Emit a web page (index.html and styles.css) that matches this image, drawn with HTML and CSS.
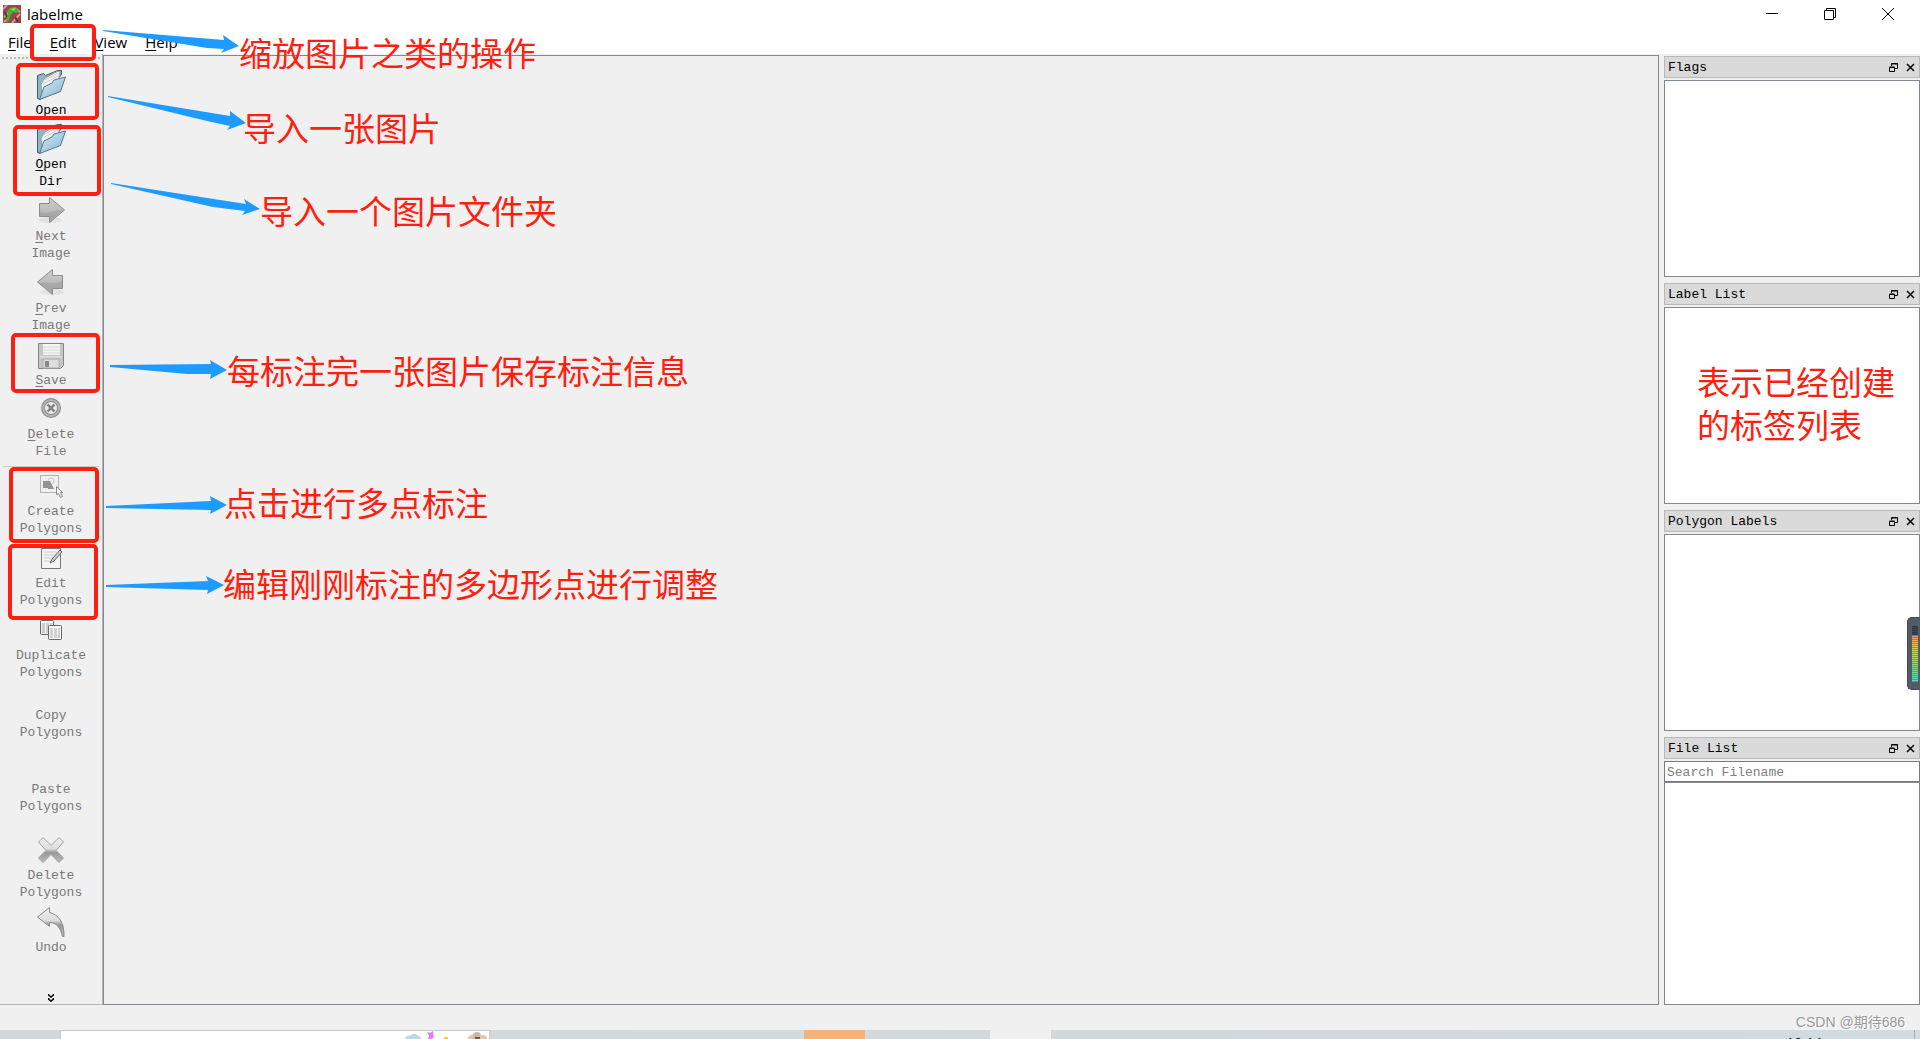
FILE: index.html
```html
<!DOCTYPE html>
<html lang="zh-CN">
<head>
  <meta charset="UTF-8" />
  <meta name="viewport" content="width=device-width, initial-scale=1.0" />
  <title>labelme</title>
  <link rel="stylesheet" href="styles.css">
</head>
<body>
  <header class="titlebar">
    <svg class="app-icon" width="18" height="18" viewBox="0 0 18 18">
      <rect width="18" height="18" fill="#96494c"/>
      <path d="M0 4l4-4M1 12l5-5M9 18l8-9M12 3l5 4M1 17l4-3" stroke="#d69a91" stroke-width="2"/>
      <path d="M12 12l3 5M2 7l2 5" stroke="#6b2f36" stroke-width="2"/>
      <path d="M3 17c1-4 1-6 2-8l-1-3 3-3 5-1 3 3-1 3-4-1-3 4-1 5z" fill="#42b52f"/>
      <path d="M7 4l6-1-2 3z" fill="#7be25b"/>
    </svg>
    <h1>labelme</h1>
    <div class="window-buttons">
      <button aria-label="Minimize"><svg width="12" height="12" viewBox="0 0 12 12"><path d="M0 5.500h12"/></svg></button>
      <button aria-label="Restore"><svg width="12" height="12" viewBox="0 0 12 12"><path d="M.5 2.500h9v9h-9zM2.500 2.500v-2h9v9h-2"/></svg></button>
      <button aria-label="Close"><svg width="12" height="12" viewBox="0 0 12 12"><path d="M0 0l12 12M12 0L0 12"/></svg></button>
    </div>
  </header>

  <nav class="menubar">
    <button><u>F</u>ile</button>
    <button><u>E</u>dit</button>
    <button><u>V</u>iew</button>
    <button><u>H</u>elp</button>
  </nav>

  <main>
    <div class="toolbar">
      <div class="handle"></div>
      <button class="tool short">
        <svg viewBox="0 0 32 32"><use href="#folder"/></svg>
        <span><u>O</u>pen</span>
      </button>
      <button class="tool">
        <svg viewBox="0 0 32 32"><use href="#folder"/></svg>
        <span><u>O</u>pen<br>Dir</span>
      </button>
      <button class="tool" disabled>
        <svg viewBox="0 0 32 32"><ellipse cx="15" cy="25" rx="12" ry="3" fill="#e2e2e2"/><path d="M4.500 8.500h10v-6l15 12.500-15 12.500v-6h-10z" fill="url(#metal)" stroke="#8c8c8c"/><path d="M5 17c8 3 14-3 23-2L15 26v-5H5z" fill="#999" opacity=".5"/></svg>
        <span><u>N</u>ext<br>Image</span>
      </button>
      <button class="tool" disabled>
        <svg viewBox="0 0 32 32"><ellipse cx="17" cy="25" rx="12" ry="3" fill="#e2e2e2"/><path d="M27.500 8.500h-10v-6L2.500 15l15 12.500v-6h10z" fill="url(#metal)" stroke="#8c8c8c"/><path d="M27 14c-8 4-14 0-23 2l13 10v-5h10z" fill="#999" opacity=".5"/></svg>
        <span><u>P</u>rev<br>Image</span>
      </button>
      <button class="tool short" disabled>
        <svg viewBox="0 0 32 32"><path d="M3.500 4.500h25v22l-3 3h-22z" fill="#c5c5c5" stroke="#858585"/><path d="M8 5h17v11H8z" fill="#f5f5f5"/><path d="M8 8h17M8 11h17M8 14h17" stroke="#d6d6d6"/><path d="M5 18h22" stroke="#eee"/><path d="M8 20h16v9H8z" fill="#ddd" stroke="#aaa"/><path d="M10 22h4v6h-4z" fill="#898989"/></svg>
        <span><u>S</u>ave</span>
      </button>
      <button class="tool" disabled>
        <svg viewBox="0 0 32 32"><circle cx="16" cy="15" r="8" fill="#efefef" stroke="#8c8c8c" stroke-width="4"/><circle cx="16" cy="15" r="8" fill="none" stroke="#b4b4b4" stroke-width="2"/><path d="M12.500 11.500l7 7M19.500 11.500l-7 7" stroke="#858585" stroke-width="2.500"/></svg>
        <span><u>D</u>elete<br>File</span>
      </button>
      <hr>
      <button class="tool" disabled>
        <svg viewBox="0 0 32 32"><circle cx="16" cy="11" r="3" fill="#eee" stroke="#ccc"/><path d="M8 11h7l4 8h-6v-1H8z" fill="#929292"/><path d="M5.500 5.500h18v17h-18z" fill="none" stroke="#777" stroke-dasharray="1 1"/><path d="M21.500 16.500v8l2-1 2 4 2-1-2-4h2z" fill="#f5f5f5" stroke="#888"/></svg>
        <span>Create<br>Polygons</span>
      </button>
      <button class="tool" disabled>
        <svg viewBox="0 0 32 32"><path d="M6.500 6.500h19v20h-19z" fill="#f4f4f4" stroke="#777"/><path d="M9 10h12M9 13h12M9 16h9M9 19h6" stroke="#ccc"/><path d="M15 21l2-4 8-9 2 2-8 9z" fill="#ccc" stroke="#666"/></svg>
        <span>Edit<br>Polygons</span>
      </button>
      <button class="tool" disabled>
        <svg viewBox="0 0 32 32"><rect x="5.500" y="6.500" width="13" height="14" rx="1" fill="#f2f2f2" stroke="#666"/><path d="M7 10h10M7 12h10M7 14h10M7 16h10M7 18h10" stroke="#aaa" stroke-dasharray="3 1"/><rect x="13.500" y="11.500" width="13" height="14" rx="1" fill="#f7f7f7" stroke="#666"/><path d="M15 15h10M15 17h10M15 19h10M15 21h10M15 23h10" stroke="#aaa" stroke-dasharray="3 1"/></svg>
        <span>Duplicate<br>Polygons</span>
      </button>
      <button class="tool text-only" disabled><span>Copy<br>Polygons</span></button>
      <button class="tool text-only" disabled><span>Paste<br>Polygons</span></button>
      <button class="tool" disabled>
        <svg viewBox="0 0 32 32"><path d="M8 3.500l8 8 8-8 4.500 4.500-7.500 8.500 7.500 7.500-4.500 4.500-8-8-8 8L3.500 24l7.500-7.500L3.500 8z" fill="url(#cross)" stroke="#a0a0a0" stroke-linejoin="round"/></svg>
        <span>Delete<br>Polygons</span>
      </button>
      <button class="tool" disabled>
        <svg viewBox="0 0 32 32"><path d="M14.500 1.500v5c9 2 15 10 14.500 24h-1.500c-2-9-6-14-13-14v4L2.500 11z" fill="url(#cross)" stroke="#888"/></svg>
        <span>Undo</span>
      </button>
      <button class="more" aria-label="More tools"><svg width="6" height="8" viewBox="0 0 6 8"><path d="M.5 0v1L3 3l2.500-2V0M.5 4v1L3 7l2.500-2V4" fill="none" stroke="#000" stroke-width="1.500"/></svg></button>
    </div>

    <section class="canvas" aria-label="Image canvas"></section>

    <aside class="docks">
      <section class="dock">
        <div class="dock-title">
          <h2>Flags</h2>
          <button aria-label="Float Flags"><svg viewBox="0 0 9 9"><use href="#float"/></svg></button>
          <button aria-label="Close Flags"><svg viewBox="0 0 9 9"><use href="#close"/></svg></button>
        </div>
        <div class="list"></div>
      </section>
      <section class="dock">
        <div class="dock-title">
          <h2>Label List</h2>
          <button aria-label="Float Label List"><svg viewBox="0 0 9 9"><use href="#float"/></svg></button>
          <button aria-label="Close Label List"><svg viewBox="0 0 9 9"><use href="#close"/></svg></button>
        </div>
        <div class="list"><p class="list-note">表示已经创建<br>的标签列表</p></div>
      </section>
      <section class="dock">
        <div class="dock-title">
          <h2>Polygon Labels</h2>
          <button aria-label="Float Polygon Labels"><svg viewBox="0 0 9 9"><use href="#float"/></svg></button>
          <button aria-label="Close Polygon Labels"><svg viewBox="0 0 9 9"><use href="#close"/></svg></button>
        </div>
        <div class="list"></div>
        <div class="meter"><span></span></div>
      </section>
      <section class="dock file-dock">
        <div class="dock-title">
          <h2>File List</h2>
          <button aria-label="Float File List"><svg viewBox="0 0 9 9"><use href="#float"/></svg></button>
          <button aria-label="Close File List"><svg viewBox="0 0 9 9"><use href="#close"/></svg></button>
        </div>
        <input type="text" aria-label="Search Filename" placeholder="Search Filename">
        <div class="list"></div>
      </section>
    </aside>
  </main>

  <div class="statusbar"><span>CSDN @期待686</span></div>

  <footer class="taskbar">
    <div class="task-start"></div>
    <div class="task-search">
      <svg width="84" height="8" viewBox="0 0 84 8">
        <path d="M0 8c0-3 3-4 5-3 2-3 6-3 8 0 2 0 3 1 3 3z" fill="#bcd8e4"/>
        <path d="M22 1l3 1 3-2v3l1 3-2 2h-4l1-3z" fill="#e77cf2"/>
        <circle cx="41" cy="8" r="2" fill="#ffb900"/>
        <circle cx="67" cy="8" r="4" fill="#d9c6b5"/><circle cx="72" cy="5" r="4" fill="#cbb8a8"/><circle cx="78" cy="8" r="4" fill="#d9c6b5"/><path d="M70 6h5v2h-5z" fill="#765744"/>
      </svg>
    </div>
    <div class="task-apps"></div>
    <div class="task-orange"></div>
    <div class="task-gap"></div>
    <div class="task-active"></div>
    <div class="task-rest"><time>10:14</time></div>
  </footer>

  <!-- red boxes and arrows over the toolbar -->
  <svg class="marks" width="280" height="640" viewBox="0 0 280 640">
    <g fill="none" stroke="#ff1f10" stroke-width="4">
      <rect x="32" y="26" width="62" height="33" rx="3"/>
      <rect x="18" y="65" width="79" height="53" rx="3"/>
      <rect x="15" y="127" width="84" height="67" rx="3"/>
      <rect x="13" y="335" width="85" height="56" rx="3"/>
      <rect x="11" y="469" width="86" height="72" rx="3"/>
      <rect x="10" y="546" width="86" height="72" rx="3"/>
    </g>
    <g fill="#1e9bff">
      <path d="M103 30l121 10-1-5 16 11-18 7 3-4-17-1-104-17z"/>
      <path d="M108 96l122 20v-5l16 12-19 7 3-4-23-5-99-24z"/>
      <path d="M111 183l135 21-2-5 16 10-18 6 3-4-32-4-102-23z"/>
      <path d="M110 365l101-1-1-4 17 10-17 9 1-5-24 0-77-7z"/>
      <path d="M106 506l105-5-1-5 17 9-17 9 1-4-105-2z"/>
      <path d="M106 585l102-4-2-5 18 9-17 9 1-4-102-3z"/>
    </g>
  </svg>
  <p class="note note-edit">缩放图片之类的操作</p>
  <p class="note note-open">导入一张图片</p>
  <p class="note note-dir">导入一个图片文件夹</p>
  <p class="note note-save">每标注完一张图片保存标注信息</p>
  <p class="note note-create">点击进行多点标注</p>
  <p class="note note-polygons">编辑刚刚标注的多边形点进行调整</p>

  <!-- shared icons -->
  <svg class="defs" width="0" height="0">
    <defs>
      <linearGradient id="metal" x1="0" y1="0" x2="0" y2="1"><stop offset="0" stop-color="#d0d0d0"/><stop offset="1" stop-color="#a8a8a8"/></linearGradient>
      <linearGradient id="cross" x1="0" y1="0" x2="0" y2="1"><stop offset="0" stop-color="#f0f0f0"/><stop offset=".45" stop-color="#ddd"/><stop offset=".6" stop-color="#999"/><stop offset="1" stop-color="#bbb"/></linearGradient>
      <linearGradient id="blue" x1="0" y1="0" x2="1" y2="1"><stop offset="0" stop-color="#d7edf7"/><stop offset="1" stop-color="#82b4cf"/></linearGradient>
      <g id="folder" stroke-linejoin="round">
        <path d="M2.500 6.500l6-2 2 2 12-5 4 0v4L5.500 30.500l-3-1z" fill="#8eb7cb" stroke="#4a5a62"/>
        <path d="M6 15L10 9l13-7 2 1-2 11L7 25z" fill="#f4f4f4" stroke="#999"/>
        <path d="M8 12l15-8M8 15l15-8" stroke="#ccc"/>
        <path d="M4.500 30.500L9 18l8-4 2-3 11.500-3-5 14.500z" fill="url(#blue)" stroke="#50758a"/>
      </g>
      <g id="float" fill="none" stroke="#000"><path d="M.5 4.500h5v4h-5zM.5 4h5M2.500 3V.5h6v5H6M2.500 1h6"/></g>
      <path id="close" d="M1 1l7 7M8 1L1 8" fill="none" stroke="#000" stroke-width="1.500"/>
    </defs>
  </svg>
</body>
</html>
```
FILE: styles.css
```css
* {
  box-sizing: border-box;
}
body {
  position: relative;
  display: flex;
  flex-direction: column;
  height: 100vh;
  margin: 0;
  overflow: hidden;
  background: #f0f0f0;
  color: #000;
  font-family: "Liberation Mono", "Noto Sans CJK SC", monospace;
  font-size: 13px;
}
button {
  padding: 0;
  border: none;
  background: none;
  color: inherit;
  font: inherit;
}
h1, h2, p {
  margin: 0;
  font-weight: normal;
}
.titlebar {
  display: flex;
  align-items: center;
  height: 28px;
  padding-left: 3px;
  background: #fff;
  font-family: "Open Sans", sans-serif;
}
.titlebar h1 {
  margin-left: 6px;
  font-size: 15px;
  line-height: 28px;
}
.window-buttons {
  display: flex;
  margin-left: auto;
  padding-right: 3px;
}
.window-buttons button {
  display: flex;
  align-items: center;
  justify-content: center;
  width: 58px;
  height: 28px;
}
.window-buttons svg {
  fill: none;
  stroke: #000;
}
.menubar {
  display: flex;
  gap: 18px;
  height: 26px;
  padding-left: 8px;
  background: #fff;
  font-family: "Open Sans", sans-serif;
  font-size: 15px;
  line-height: 28px;
}
u {
  text-underline-offset: 2px;
}
main {
  display: flex;
  flex: 1;
  min-height: 0;
}

/* toolbar */
.toolbar {
  display: flex;
  flex-direction: column;
  align-items: center;
  width: 103px;
  border-right: 1px solid #b4b4b4;
  border-bottom: 1px solid #b4b4b4;
}
.handle {
  flex: none;
  align-self: stretch;
  height: 2px;
  margin: 3px 2px 7px;
  background: repeating-linear-gradient(90deg, #bbb 0 2px, transparent 2px 4px);
}
.tool {
  display: flex;
  flex: none;
  flex-direction: column;
  align-items: center;
  width: 100%;
  padding: 3px 0 2px;
  line-height: 17px;
}
.tool.short {
  padding-bottom: 1px;
}
.tool span {
  padding-top: 1px;
}
.tool:disabled {
  color: #787878;
}
.tool svg {
  width: 32px;
  height: 32px;
}
.tool.text-only {
  height: 74px;
  padding-top: 23px;
}
.toolbar hr {
  flex: none;
  align-self: stretch;
  height: 1px;
  margin: 4px 3px 0;
  border: none;
  background: #ccc;
}
.more {
  margin-top: auto;
  padding-bottom: 2px;
  line-height: 8px;
}
.more svg {
  display: block;
}

.canvas {
  flex: 1;
  margin-top: 1px;
  border: 1px solid #828790;
}

/* right docks */
.docks {
  display: flex;
  flex-direction: column;
  gap: 6px;
  width: 261px;
  padding: 2px 0 0 5px;
}
.dock {
  position: relative;
  display: flex;
  flex: 221 1 0;
  flex-direction: column;
  min-height: 0;
}
.file-dock {
  flex-grow: 268;
}
.dock-title {
  display: flex;
  flex: none;
  align-items: center;
  gap: 8px;
  height: 22px;
  margin-bottom: 2px;
  padding: 0 4px 0 3px;
  border: 1px solid #b8b8b8;
  background: #dadada;
}
.dock-title h2 {
  flex: 1;
  padding-top: 1px;
  font-size: 13px;
}
.dock-title svg {
  display: block;
  width: 9px;
  height: 9px;
}
.list {
  flex: 1;
  border: 1px solid #828790;
  background: #fff;
}
.file-dock input {
  height: 21px;
  padding: 1px 2px 0;
  border: 1px solid #7a7a7a;
  border-radius: 0;
  background: #fff;
  font: inherit;
}
.file-dock input::placeholder {
  color: #808080;
}
.meter {
  position: absolute;
  right: 0;
  bottom: 41px;
  width: 13px;
  height: 73px;
  padding: 8px 2px 7px 4px;
  border: 1px solid #444955;
  border-right: none;
  border-radius: 5px 0 0 5px;
  background: #535a68;
}
.meter span {
  display: block;
  height: 100%;
  background:
    repeating-linear-gradient(transparent 0 1px, rgba(83, 90, 104, 0.5) 1px 2px),
    linear-gradient(#30343e 0 16%, #ff8b50 17%, #e5c44c 35%, #b9d65a 55%, #7fd77d 75%, #4cdcc5);
}

.statusbar {
  height: 25px;
  padding: 8px 15px 0 0;
  color: #999;
  font: 14px/18px "Liberation Sans", "Noto Sans CJK SC", sans-serif;
  text-align: right;
  text-shadow: 1px 1px 0 #fff;
}
.taskbar {
  display: flex;
  height: 9px;
  background: linear-gradient(90deg, #d4d7d9, #d4d9dc 40%, #d2d8da 60%, #d0dce0);
}
.task-start {
  width: 60px;
}
.task-search {
  width: 430px;
  border: 1px solid #c8c8c8;
  border-bottom: none;
  background: #fff;
}
.task-search svg {
  display: block;
  margin-left: auto;
}
.task-apps {
  width: 314px;
}
.task-orange {
  width: 61px;
  background: #f7b17a;
}
.task-gap {
  width: 125px;
}
.task-active {
  width: 61px;
  background: #f0f0f0;
}
.task-rest {
  flex: 1;
  overflow: hidden;
  margin-right: 5px;
  padding: 4px 92px 0 0;
  border-right: 1px solid #a9b1b5;
  font: 14px/18px "Open Sans", sans-serif;
  text-align: right;
}

/* annotations */
.marks {
  position: absolute;
  top: 0;
  left: 0;
  pointer-events: none;
}
.note,
.list-note {
  color: #ff1f10;
  font-family: "Noto Sans CJK SC", sans-serif;
  font-size: 33px;
  font-weight: 400;
  line-height: 43px;
  white-space: nowrap;
}
.note {
  position: absolute;
}
.note-edit {
  top: 31px;
  left: 239px;
}
.note-open {
  top: 106px;
  left: 243px;
}
.note-dir {
  top: 189px;
  left: 260px;
}
.note-save {
  top: 349px;
  left: 227px;
}
.note-create {
  top: 481px;
  left: 224px;
}
.note-polygons {
  top: 562px;
  left: 223px;
}
.list-note {
  padding: 52px 0 0 32px;
}
.defs {
  position: absolute;
}
```
